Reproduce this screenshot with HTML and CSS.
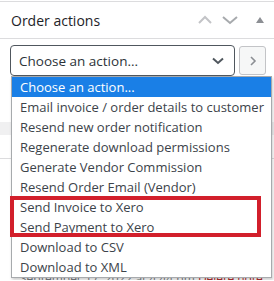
FILE: index.html
```html
<!DOCTYPE html>
<html lang="en">
<head>
    <meta charset="UTF-8">
    <title>Order actions</title>
    <link rel="stylesheet" href="styles.css">
</head>
<body>
    <div class="postbox">
        <div class="postbox-header">
            <h2>Order actions</h2>
            <div class="handle-actions">
                <svg class="handle" width="16" height="10" viewBox="0 0 16 10"><path d="M2 8 L8 2 L14 8" fill="none" stroke="#c3c4c7" stroke-width="2"/></svg>
                <svg class="handle" width="18" height="10" viewBox="0 0 18 10"><path d="M2 2 L9 8 L16 2" fill="none" stroke="#a7aaad" stroke-width="2"/></svg>
                <svg class="toggle" width="8" height="6" viewBox="0 0 8 6"><path d="M0 6 L4 0 L8 6 Z" fill="#8c8f94"/></svg>
            </div>
        </div>
        <div class="inside">
            <div class="action-row">
                <div class="select-box">
                    <span>Choose an action...</span>
                    <svg width="12" height="8" viewBox="0 0 12 8"><path d="M1 1.5 L6 6 L11 1.5" fill="none" stroke="#50575e" stroke-width="2"/></svg>
                </div>
                <button class="go-button">
                    <svg width="8" height="10" viewBox="0 0 8 10"><path d="M2 1 L6 5 L2 9" fill="none" stroke="#8c8f94" stroke-width="1.6"/></svg>
                </button>
            </div>
            <div class="notes">
                <div class="note-band"></div>
                <div class="note-line"></div>
                <p class="note-meta">September 17, 2022 at 4:44 pm <a href="#">Delete note</a></p>
            </div>
        </div>

        <ul class="dropdown">
            <li class="selected">Choose an action...</li>
            <li>Email invoice / order details to customer</li>
            <li>Resend new order notification</li>
            <li>Regenerate download permissions</li>
            <li>Generate Vendor Commission</li>
            <li>Resend Order Email (Vendor)</li>
            <li>Send Invoice to Xero</li>
            <li>Send Payment to Xero</li>
            <li>Download to CSV</li>
            <li>Download to XML</li>
        </ul>
        <div class="highlight-box"></div>
    </div>
</body>
</html>
```

FILE: styles.css
```css
:root {
    --text: #1d2327;
    --border: #c3c4c7;
    --blue: #1a7fe6;
    --red: #d21f2b;
}

* {
    margin: 0;
    padding: 0;
    box-sizing: border-box;
}

body {
    font-family: 'Open Sans', 'Noto Sans', sans-serif;
    color: var(--text);
    background: #fff;
    overflow: hidden;
}

.postbox {
    position: relative;
    margin-top: 1px;
    border-top: 1px solid #dcdcde;
    height: 279px;
    overflow: hidden;
}

.postbox-header {
    display: flex;
    align-items: center;
    justify-content: space-between;
    height: 37px;
    border-bottom: 1px solid #dcdcde;
    padding: 0 10px 0 11px;
}

.postbox-header h2 {
    font-size: 14px;
    font-weight: 500;
    color: var(--text);
}

.handle-actions {
    display: flex;
    align-items: center;
    gap: 8px;
}

.handle-actions .toggle {
    margin-left: 9px;
}

.inside {
    padding: 6px 8px 0 10px;
}

.action-row {
    display: flex;
    gap: 4px;
}

.select-box {
    display: flex;
    align-items: center;
    justify-content: space-between;
    width: 226px;
    height: 31px;
    padding: 0 10px 0 8px;
    border: 1px solid #50575e;
    border-radius: 4px;
    font-size: 13.5px;
    color: #2c3338;
}

.go-button {
    display: flex;
    align-items: center;
    justify-content: center;
    width: 27px;
    height: 29px;
    margin-top: 1px;
    border: 1px solid var(--border);
    border-radius: 3px;
    background: #f6f7f7;
}

.notes {
    margin: 0 -8px 0 -10px;
}

.note-band {
    height: 13px;
    margin-top: 46px;
    background: #f0f0f1;
}

.note-line {
    height: 1px;
    margin-top: 23px;
    background: #dcdcde;
}

.note-meta {
    margin-top: 113px;
    padding-left: 20px;
    font-size: 12px;
    line-height: 14px;
    color: #787c82;
}

.note-meta a {
    color: #b32d2e;
}

.dropdown {
    position: absolute;
    top: 74px;
    left: 11px;
    width: 261px;
    list-style: none;
    background: #fff;
    border: 1px solid #a7aaad;
    box-shadow: 1px 2px 3px rgba(0, 0, 0, 0.2);
}

.dropdown li {
    height: 20px;
    padding-left: 8px;
    font-size: 13px;
    line-height: 20px;
    color: #3c434a;
    white-space: nowrap;
}

.dropdown li.selected {
    background: var(--blue);
    color: #fff;
}

.highlight-box {
    position: absolute;
    top: 194px;
    left: 10px;
    width: 251px;
    height: 41px;
    border: 4px solid var(--red);
}
```
